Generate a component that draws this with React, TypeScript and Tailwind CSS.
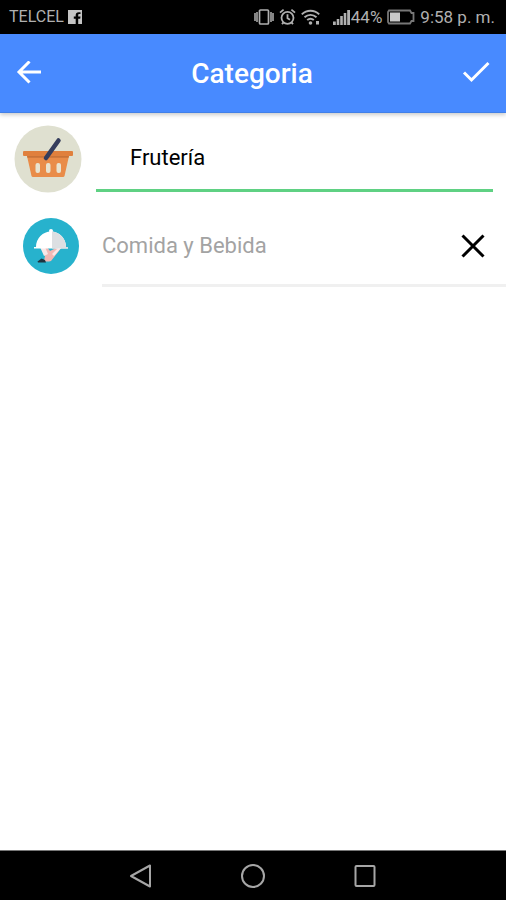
import { useState } from "react";

function StatusBar() {
  return (
    <div className="h-[34px] shrink-0 bg-black text-[#b0b0b0] flex items-center justify-between pl-[9px] pr-[11px] text-[17px] leading-5">
      <div className="flex items-center gap-1">
        <span className="text-base leading-5">TELCEL</span>
        <svg width="14" height="14" viewBox="0 0 14 14" aria-hidden="true">
          <path
            fill="#c4c4c4"
            d="M0 0h14v14h-3.800V8.800h2l.3-2.200h-2.300V5.200c0-.7.3-1.100 1.100-1.100h1.200V2.200h-1.800C8.700 2.200 7.700 3.400 7.700 5v1.600H5.800v2.200h1.900V14H0z"
          />
        </svg>
      </div>
      <div className="flex items-center gap-[5px]">
        {/* vibrate */}
        <svg width="20" height="18" viewBox="0 0 20 18" fill="none" stroke="currentColor" aria-hidden="true">
          <rect x="5.500" y="2" width="9" height="14" rx="1" strokeWidth="1.700" />
          <path strokeWidth="1.500" d="M1 5v8M19 5v8M3 4v10M17 4v10" />
        </svg>
        {/* alarm */}
        <svg width="17" height="18" viewBox="0 0 17 18" fill="none" stroke="currentColor" aria-hidden="true">
          <circle cx="8.500" cy="9.800" r="6" strokeWidth="1.800" />
          <path strokeWidth="1.800" d="M8.500 6.300v3.900l2.500 1.500M1 4.600l3.600-3M16 4.600l-3.600-3M4.600 14.300L3 16.200M12.400 14.300l1.600 1.900" />
        </svg>
        {/* wifi */}
        <svg width="19" height="18" viewBox="0 0 19 18" fill="none" stroke="currentColor" aria-hidden="true">
          <path strokeWidth="2" d="M.8 6.400c5-4.800 12.400-4.800 17.400 0M3.500 9.300c3.600-3.200 8.400-3.200 12 0M6.200 12.100c2-1.700 4.600-1.700 6.600 0" />
          <circle cx="9.500" cy="15" r="1.800" fill="currentColor" stroke="none" />
          <path fill="currentColor" stroke="none" d="M15 13h3v3.500h-3z" />
        </svg>
        <div className="flex items-center pl-2">
          {/* signal */}
          <svg width="18" height="17" viewBox="0 0 18 17" fill="currentColor" aria-hidden="true">
            <path d="M0 12.500h2.800V16H0zM3.700 10h2.600v6H3.700zM7.200 7h2.600v9H7.200zM10.700 4h2.600v12h-2.600zM14.200 1h2.800v15h-2.800z" />
          </svg>
          <span className="leading-5">44%</span>
        </div>
        {/* battery */}
        <svg width="28" height="16" viewBox="0 0 28 16" fill="none" aria-hidden="true">
          <path stroke="#777" strokeWidth="1.800" d="M2 1.500h21l1.500 2.500h2v8h-2L23 14.500H2L1 13V3z" />
          <path fill="#c8c8c8" d="M3 3.500h10v9H3z" />
        </svg>
        <span>9:58 p. m.</span>
      </div>
    </div>
  );
}

function BasketIcon() {
  return (
    <svg className="shrink-0" width="68" height="68" viewBox="0 0 68 68" aria-hidden="true">
      <circle cx="34" cy="34" r="33.500" fill="#dfe0d0" />
      <path fill="#e98c49" d="M13 31h42l-4.500 20q-.3 1-1.500 1H19q-1.200 0-1.500-1z" />
      <rect x="9" y="26" width="50" height="5" rx="1" fill="#e0803d" />
      <path fill="#c87338" d="M13 31h42l-.4 1.800H13.400z" />
      <g fill="#e8e3d0">
        <rect x="21.500" y="38" width="4.500" height="10" rx="2" />
        <rect x="32" y="38" width="4.500" height="10" rx="2" />
        <rect x="42.500" y="38" width="4.500" height="10" rx="2" />
      </g>
      <path stroke="#353d5c" strokeWidth="4.500" strokeLinecap="round" d="M32 33L44.500 15.500" />
    </svg>
  );
}

function ClocheIcon() {
  return (
    <svg className="shrink-0" width="56" height="56" viewBox="0 0 56 56" aria-hidden="true">
      <circle cx="28" cy="28" r="28" fill="#27b2cd" />
      {/* hand */}
      <path fill="#f1b8b4" d="M20 29h4l3 4 8-4h4L28 43q-4 1-7 0l1-5z" />
      <path fill="#f8e8e8" d="M17 29h5l3 7-4 2zM36 29h3l-8 9-2-2z" />
      <path fill="#1f3440" d="M14.500 43.500l4-3 3.500 1.500 1 2.500h-8z" />
      {/* dome */}
      <circle cx="28" cy="13" r="2" fill="#fff" />
      <path fill="#fff" d="M11 30.500V29h2a15 15.500 0 0 1 30 0h2v1.500z" />
      <path fill="#dcdfe2" d="M29 13.500a15 15.500 0 0 1 14 15.500h2v1.500H29z" />
    </svg>
  );
}

export default function App() {
  const [name, setName] = useState("Frutería");

  return (
    <div className="min-h-screen flex flex-col bg-white font-[Roboto,sans-serif]">
      <StatusBar />

      <header className="h-[79px] shrink-0 bg-[#488aff] text-white flex items-center justify-between px-4 pt-[2px] border-b border-[#4280e8] shadow-[0_2px_4px_rgba(0,0,0,0.2)]">
        <button type="button" aria-label="Volver">
          <svg width="26" height="26" viewBox="0 0 26 26" fill="none" stroke="currentColor" strokeWidth="3" aria-hidden="true">
            <path d="M25 11H3.500M13.500 .5L3 11l10.500 10.500" />
          </svg>
        </button>
        <h1 className="text-[28px] leading-8 font-medium">Categoria</h1>
        <button type="button" aria-label="Guardar">
          <svg width="28" height="26" viewBox="0 0 28 26" fill="none" stroke="currentColor" strokeWidth="3" aria-hidden="true">
            <path d="M2 11.500l7.500 7.500L26.500 2" />
          </svg>
        </button>
      </header>

      <main className="flex-1 pt-3">
        <div className="flex items-center gap-[14px] pl-[14px] pr-[13px] pb-3">
          <BasketIcon />
          <input
            type="text"
            aria-label="Nombre de la categoría"
            value={name}
            onChange={(e) => setName(e.target.value)}
            className="flex-1 min-w-0 h-[66px] pl-[34px] text-[22px] leading-7 text-black border-b-[3px] border-[#5fd183] outline-none"
          />
        </div>

        <div className="flex pl-[23px] gap-[23px]">
          <div className="pt-[13px]">
            <ClocheIcon />
          </div>
          <div className="flex-1 flex items-center justify-between h-[82px] pt-[2px] pr-5 border-b-[3px] border-[#f0f0f0]">
            <span className="text-[22px] leading-7 text-[#a3a3a3]">Comida y Bebida</span>
            <button type="button" aria-label="Quitar">
              <svg width="26" height="26" viewBox="0 0 26 26" stroke="#000" strokeWidth="3" aria-hidden="true">
                <path d="M2.500 2.500l21 21M23.500 2.500l-21 21" />
              </svg>
            </button>
          </div>
        </div>
      </main>

      <nav className="h-[50px] shrink-0 bg-black border-t border-[#777] flex items-center justify-center gap-[88px]">
        <button type="button" aria-label="Atrás">
          <svg width="24" height="24" viewBox="0 0 24 24" fill="none" stroke="#a6a6a6" strokeWidth="2" strokeLinejoin="round" aria-hidden="true">
            <path d="M21 1.500v21L2 12z" />
          </svg>
        </button>
        <button type="button" aria-label="Inicio">
          <svg width="24" height="24" viewBox="0 0 24 24" fill="none" stroke="#a6a6a6" strokeWidth="2" aria-hidden="true">
            <circle cx="12" cy="12" r="11" />
          </svg>
        </button>
        <button type="button" aria-label="Recientes">
          <svg width="24" height="24" viewBox="0 0 24 24" fill="none" stroke="#a6a6a6" strokeWidth="2" aria-hidden="true">
            <rect x="2.500" y="2" width="19" height="20" rx="1" />
          </svg>
        </button>
      </nav>
    </div>
  );
}
